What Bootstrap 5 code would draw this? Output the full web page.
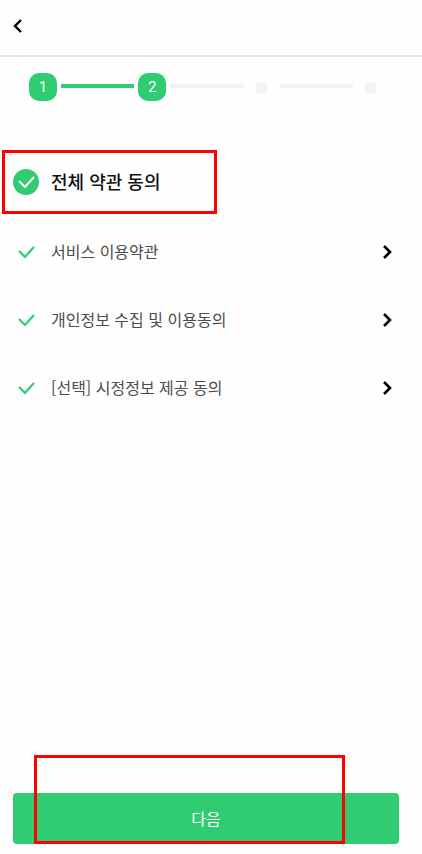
<!DOCTYPE html>
<html lang="ko">
<head>
<meta charset="utf-8">
<meta name="viewport" content="width=device-width, initial-scale=1">
<title>약관 동의</title>
<link href="https://cdn.jsdelivr.net/npm/bootstrap@5.3.0/dist/css/bootstrap.min.css" rel="stylesheet">
<style>
  :root { --brand: #2fcc71; --idle: #f3f3f3; }
  body { font-family: "Noto Sans CJK KR", sans-serif; font-size: 16px; line-height: 24px; color: #4c4c4c; background: #fefefe; }
  .top-bar { height: 57px; border-bottom: 2px solid #e8e8e8; padding: 0 12px 3px; }
  .icon-btn { width: 12px; height: 16px; }
  .steps { gap: 4px; padding: 16px 37px 0 29px; }
  .step { width: 28px; height: 28px; flex: none; }
  .step-done { background: var(--brand); border-radius: 10px; color: #fff; font-family: Roboto, sans-serif; font-size: 15px; font-weight: 400; }
  .step-dot { width: 11px; height: 11px; border-radius: 4px; background: var(--idle); }
  .step-line { height: 4px; background: var(--idle); margin-bottom: 2px; }
  .step-line.reached { background: var(--brand); }
  .agree-row { height: 68px; padding: 0 29px 0 13px; }
  .agree-row label { padding-bottom: 2px; }
  .agree-all { height: 64px; margin: 49px 0 4px; }
  .agree-all label { font-size: 18px; font-weight: 500; color: #111; }
  .tick { appearance: none; width: 26px; height: 26px; flex: none; margin: 0 12px 0 0; background: center / 26px 26px no-repeat; opacity: .3; }
  .tick:checked { opacity: 1; }
  .tick-line { background-image: url("data:image/svg+xml,%3Csvg xmlns='http://www.w3.org/2000/svg' viewBox='0 0 26 26' fill='none' stroke='%232fcc71' stroke-width='2.2'%3E%3Cpath d='M6 12l6 6 9-10'/%3E%3C/svg%3E"); }
  .tick-full { border-radius: 50%; background-color: var(--brand); background-image: url("data:image/svg+xml,%3Csvg xmlns='http://www.w3.org/2000/svg' viewBox='0 0 26 26' fill='none' stroke='%23fff' stroke-width='2'%3E%3Cpath d='M6 12l6 6 9-10'/%3E%3C/svg%3E"); }
  .frame { position: absolute; border: 3px solid #f00; pointer-events: none; }
  .frame-all { left: 2px; top: 0; width: 215px; height: 64px; }
  .frame-next { left: 34px; right: 77px; top: -38px; bottom: 10px; }
  .next-bar { padding: 0 23px 10px 13px; }
  .btn-next { height: 51px; padding: 0 0 2px; border-radius: 4px; --bs-btn-bg: var(--brand); --bs-btn-color: #fff; --bs-btn-hover-bg: #29b765; --bs-btn-hover-color: #fff; }
</style>
<script src="https://cdn.jsdelivr.net/npm/bootstrap@5.3.0/dist/js/bootstrap.bundle.min.js" defer></script>
</head>
<body>
<svg class="d-none">
  <symbol id="chevron" viewBox="0 0 12 16"><path d="M3 2l6 6-6 6" fill="none" stroke="#000" stroke-width="2.6"/></symbol>
  <symbol id="back" viewBox="0 0 12 16"><path d="M9 2L3 8l6 6" fill="none" stroke="#000" stroke-width="2.4"/></symbol>
</svg>
<div class="min-vh-100 d-flex flex-column">
  <header class="top-bar d-flex align-items-center">
    <button type="button" class="btn p-0 border-0 d-flex" aria-label="뒤로"><svg class="icon-btn"><use href="#back"/></svg></button>
  </header>
  <main class="flex-grow-1">
    <div class="steps d-flex align-items-center">
      <div class="step step-done d-flex align-items-center justify-content-center">1</div>
      <div class="step-line reached flex-fill"></div>
      <div class="step step-done d-flex align-items-center justify-content-center">2</div>
      <div class="step-line flex-fill"></div>
      <div class="step d-flex align-items-center justify-content-center"><span class="step-dot"></span></div>
      <div class="step-line flex-fill"></div>
      <div class="step d-flex align-items-center justify-content-center"><span class="step-dot"></span></div>
    </div>
    <div class="agree-row agree-all d-flex align-items-center position-relative">
      <input class="tick tick-full" type="checkbox" id="all" checked>
      <label for="all">전체 약관 동의</label>
      <div class="frame frame-all"></div>
    </div>
    <div class="agree-row d-flex align-items-center">
      <input class="tick tick-line" type="checkbox" id="service" checked>
      <label class="flex-grow-1" for="service">서비스 이용약관</label>
      <button type="button" class="btn p-0 border-0 d-flex" aria-label="서비스 이용약관 보기"><svg class="icon-btn"><use href="#chevron"/></svg></button>
    </div>
    <div class="agree-row d-flex align-items-center">
      <input class="tick tick-line" type="checkbox" id="privacy" checked>
      <label class="flex-grow-1" for="privacy">개인정보 수집 및 이용동의</label>
      <button type="button" class="btn p-0 border-0 d-flex" aria-label="개인정보 수집 및 이용동의 보기"><svg class="icon-btn"><use href="#chevron"/></svg></button>
    </div>
    <div class="agree-row d-flex align-items-center">
      <input class="tick tick-line" type="checkbox" id="optional" checked>
      <label class="flex-grow-1" for="optional">[선택] 시정정보 제공 동의</label>
      <button type="button" class="btn p-0 border-0 d-flex" aria-label="시정정보 제공 동의 보기"><svg class="icon-btn"><use href="#chevron"/></svg></button>
    </div>
  </main>
  <footer class="next-bar position-relative">
    <button type="button" class="btn btn-next w-100 border-0">다음</button>
    <div class="frame frame-next"></div>
  </footer>
</div>
</body>
</html>
